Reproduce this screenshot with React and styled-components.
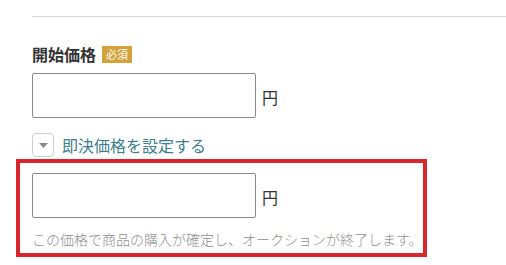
import React from "react";
import styled, { createGlobalStyle } from "styled-components";

const GlobalStyle = createGlobalStyle`
  html, body {
    margin: 0;
    padding: 0;
    background: #fff;
  }
  body {
    font-family: "Noto Sans CJK JP", "Noto Sans", sans-serif;
    color: #333;
  }
`;

const Page = styled.div`
  width: 506px;
  height: 265px;
  padding: 16px 0 0 16px;
  box-sizing: border-box;
  overflow: hidden;
`;

const Divider = styled.hr`
  margin: 0 0 0 16px;
  border: 0;
  border-top: 1px solid #d9d9d9;
`;

const LabelRow = styled.div`
  display: flex;
  align-items: center;
  gap: 6px;
  margin: 25px 0 0 16px;
  height: 24px;
`;

const Label = styled.span`
  font-size: 16px;
  font-weight: 700;
  color: #333;
  line-height: 24px;
`;

const Badge = styled.span`
  display: inline-flex;
  align-items: center;
  justify-content: center;
  height: 17px;
  padding: 0 4px;
  background: #d3a33a;
  color: #fff;
  font-size: 11px;
  line-height: 17px;
`;

const FieldRow = styled.div`
  display: flex;
  align-items: center;
  gap: 6px;
  margin: ${({ $top }) => $top}px 0 0 ${({ $left }) => $left}px;
`;

const Input = styled.input`
  width: 224px;
  height: 45px;
  box-sizing: border-box;
  border: 1px solid #8a8a8a;
  border-radius: 2px;
  outline: none;
  font-size: 14px;
  padding: 0 8px;
`;

const Unit = styled.span`
  font-size: 16px;
  color: #333;
  padding-top: 2px;
`;

const ToggleRow = styled.div`
  display: flex;
  align-items: center;
  gap: 8px;
  margin: 15px 0 0 16px;
  height: 24px;
`;

const ToggleButton = styled.span`
  display: inline-flex;
  align-items: center;
  justify-content: center;
  width: 22px;
  height: 24px;
  box-sizing: border-box;
  border: 1px solid #cfcfcf;
  border-radius: 4px;
  background: #fff;
`;

const ToggleLink = styled.span`
  font-size: 16px;
  color: #3f7f8b;
  line-height: 24px;
`;

const Highlight = styled.div`
  width: 411px;
  height: 98px;
  margin-top: 2px;
  box-sizing: border-box;
  border: 4px solid #d9262c;
  padding: 10px 0 0 12px;
`;

const Help = styled.p`
  margin: 11px 0 0;
  font-size: 14px;
  font-weight: 300;
  line-height: 20px;
  color: #8f8f8f;
  white-space: nowrap;
`;

export default function App() {
  return (
    <>
      <GlobalStyle />
      <Page>
        <Divider />
        <LabelRow>
          <Label>開始価格</Label>
          <Badge>必須</Badge>
        </LabelRow>
        <FieldRow $top={7} $left={16}>
          <Input type="text" />
          <Unit>円</Unit>
        </FieldRow>
        <ToggleRow>
          <ToggleButton>
            <svg width="9" height="5" viewBox="0 0 9 5">
              <path d="M0 0h9L4.5 5z" fill="#8a8a8a" />
            </svg>
          </ToggleButton>
          <ToggleLink>即決価格を設定する</ToggleLink>
        </ToggleRow>
        <Highlight>
          <FieldRow $top={0} $left={0}>
            <Input type="text" />
            <Unit>円</Unit>
          </FieldRow>
          <Help>この価格で商品の購入が確定し、オークションが終了します。</Help>
        </Highlight>
      </Page>
    </>
  );
}
